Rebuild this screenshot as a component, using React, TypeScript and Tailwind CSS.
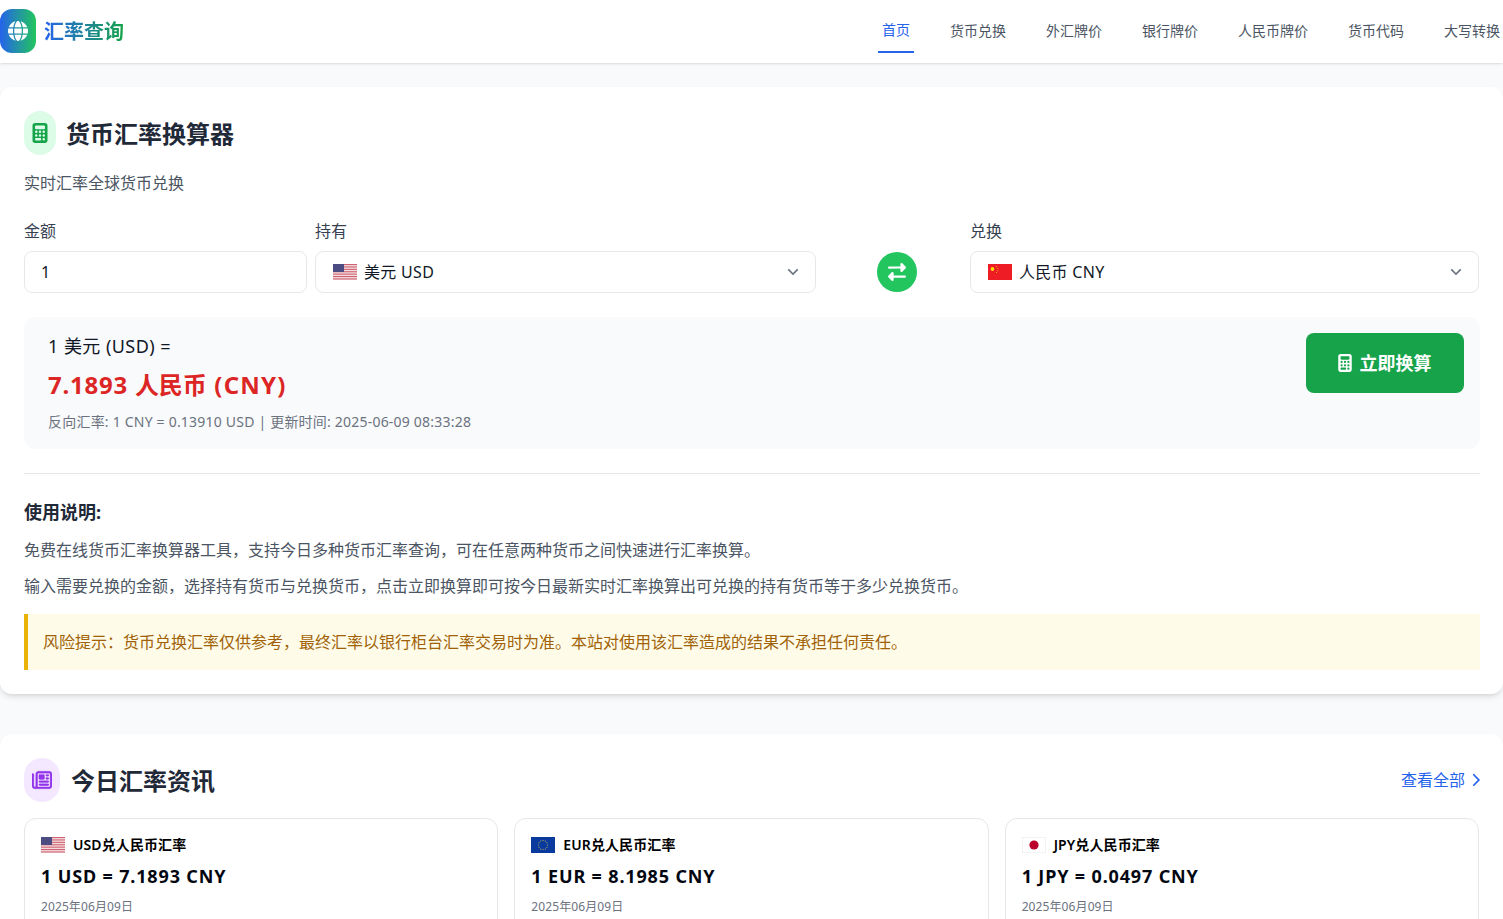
import { FaCalculator, FaChevronRight, FaGlobe, FaRegNewspaper, FaRightLeft } from "react-icons/fa6";
import { RiArrowDownSLine } from "react-icons/ri";

const navItems = ["首页", "货币兑换", "外汇牌价", "银行牌价", "人民币牌价", "货币代码", "大写转换"];

function FlagUS() {
  return (
    <svg viewBox="0 0 24 16" className="h-4 w-6 shrink-0">
      <rect width="24" height="16" fill="#f3dfe2" />
      {[0, 2.4, 4.8, 7.2, 9.6, 12, 14.4].map((y) => (
        <rect key={y} y={y} width="24" height="1.1" fill="#d0616f" />
      ))}
      <rect width="11" height="8" fill="#4c4c82" />
    </svg>
  );
}

function FlagCN() {
  return (
    <svg viewBox="0 0 24 16" className="h-4 w-6 shrink-0">
      <rect width="24" height="16" fill="#ee1c25" />
      <circle cx="4.5" cy="5" r="1.9" fill="#ffde00" />
      <circle cx="8.5" cy="2.5" r="0.5" fill="#ffde00" />
      <circle cx="9.8" cy="4.5" r="0.5" fill="#ffde00" />
      <circle cx="9.8" cy="6.8" r="0.5" fill="#ffde00" />
      <circle cx="8.5" cy="8.6" r="0.5" fill="#ffde00" />
    </svg>
  );
}

function FlagEU() {
  const stars = Array.from({ length: 12 }, (_, i) => (i * Math.PI) / 6);
  return (
    <svg viewBox="0 0 24 16" className="h-4 w-6 shrink-0">
      <rect width="24" height="16" fill="#0a3a9e" />
      {stars.map((a) => (
        <circle key={a} cx={12 + Math.cos(a) * 4.6} cy={8 + Math.sin(a) * 4.6} r="0.5" fill="#e6d23c" />
      ))}
    </svg>
  );
}

function FlagJP() {
  return (
    <svg viewBox="0 0 24 16" className="h-4 w-6 shrink-0">
      <rect x="0.25" y="0.25" width="23.5" height="15.5" fill="#fff" stroke="#e5e7eb" strokeWidth="0.5" />
      <circle cx="12" cy="8" r="4.6" fill="#bc002d" />
    </svg>
  );
}

function CurrencySelect({ flag, label }: { flag: React.ReactNode; label: string }) {
  return (
    <div className="flex h-[42px] items-center rounded-lg border border-[#e5e7eb] bg-white pl-[17px] pr-3">
      {flag}
      <span className="ml-[7px] flex-1 text-base tracking-[0.3px] text-[#111827]">{label}</span>
      <RiArrowDownSLine className="h-5 w-5 text-[#6b7280]" />
    </div>
  );
}

function NewsCard({ flag, title, rate }: { flag: React.ReactNode; title: string; rate: string }) {
  return (
    <div className="h-[130px] rounded-xl border border-[#e5e7eb] bg-white p-4">
      <div className="flex h-[20px] items-center gap-2">
        {flag}
        <span className="text-sm font-semibold tracking-[0.1px] text-black">{title}</span>
      </div>
      <div className="mt-[5px] text-[18px] leading-[32px] font-bold tracking-[0.85px] text-[#030712]">{rate}</div>
      <div className="mt-[5px] text-xs leading-[20px] tracking-[0.1px] text-[#6b7280]">2025年06月09日</div>
    </div>
  );
}

export default function App() {
  return (
    <div className="h-screen overflow-hidden bg-[#f9fafb] font-['Noto_Sans','Noto_Sans_CJK_SC',sans-serif]">
      <header className="flex h-[63px] items-center justify-between bg-white shadow-sm">
        <div className="-mt-px flex items-center gap-2">
          <div className="flex h-11 w-9 items-center justify-center rounded-xl bg-linear-to-r/srgb from-[#2563eb] to-[#22c55e]">
            <FaGlobe className="h-5 w-5 text-white" />
          </div>
          <span className="bg-linear-to-r/srgb from-[#2563eb] to-[#16a34a] bg-clip-text pt-[2px] text-xl font-bold text-transparent">
            汇率查询
          </span>
        </div>
        <nav className="flex h-full gap-10 pr-[3px]">
          {navItems.map((item, i) => (
            <a
              key={item}
              className={
                i === 0
                  ? "-mx-1 flex h-[53px] items-center self-start border-b-2 border-[#2563eb] px-1 pt-[9px] text-sm text-[#2563eb]"
                  : "flex h-[53px] items-center self-start pt-[9px] text-sm text-[#4b5563]"
              }
            >
              {item}
            </a>
          ))}
        </nav>
      </header>

      <main className="pt-6">
        <section className="rounded-xl bg-white p-6 shadow-md">
          <div className="flex items-center gap-[10px]">
            <div className="flex h-11 w-8 items-center justify-center rounded-full bg-[#dcfce7]">
              <FaCalculator className="h-5 w-5 text-[#16a34a]" />
            </div>
            <h1 className="pt-px text-2xl font-bold text-[#1f2937]">货币汇率换算器</h1>
          </div>
          <p className="mt-4 text-base leading-[24px] text-[#4b5563]">实时汇率全球货币兑换</p>

          <div className="mt-[24px] flex items-end">
            <div className="w-[283px]">
              <label className="mb-2 block text-base leading-[24px] text-[#374151]">金额</label>
              <div className="flex h-[42px] items-center rounded-lg border border-[#e5e7eb] bg-white pl-4 text-base text-[#111827]">
                1
              </div>
            </div>
            <div className="ml-2 w-[501px]">
              <label className="mb-2 block text-base leading-[24px] text-[#374151]">持有</label>
              <CurrencySelect flag={<FlagUS />} label="美元 USD" />
            </div>
            <div className="flex w-[154px] justify-center pb-px pl-2">
              <button className="flex h-10 w-10 items-center justify-center rounded-full bg-[#22c55e] text-white">
                <FaRightLeft className="h-[18px] w-[18px]" />
              </button>
            </div>
            <div className="flex-1">
              <label className="mb-2 block text-base leading-[24px] text-[#374151]">兑换</label>
              <CurrencySelect flag={<FlagCN />} label="人民币 CNY" />
            </div>
          </div>

          <div className="mr-[-1px] mt-6 flex h-[132px] items-start justify-between rounded-xl bg-[#f9fafb] py-4 pl-6 pr-4">
            <div className="-mt-px">
              <div className="text-lg leading-[28px] tracking-[0.45px] text-[#111827]">1 美元 (USD) =</div>
              <div className="mt-[9px] text-2xl leading-[32px] font-bold text-[#dc2626]">
                <span className="tracking-[0.75px]">7.1893 </span>
                人民币
                <span className="tracking-[1.2px]"> (CNY)</span>
              </div>
              <div className="mt-[11px] text-sm leading-[20px] tracking-[0.21px] text-[#6b7280]">
                反向汇率: 1 CNY = 0.13910 USD | 更新时间: 2025-06-09 08:33:28
              </div>
            </div>
            <button className="flex h-[60px] w-[158px] items-center justify-center gap-[6px] rounded-lg bg-[#16a34a] pr-[3px] text-lg font-bold text-white">
              <FaCalculator className="h-[18px] w-[18px]" />
              立即换算
            </button>
          </div>

          <div className="mr-[-1px] mt-6 border-t border-[#e5e7eb] pt-6">
            <h2 className="text-lg leading-[28px] font-bold text-[#1f2937]">使用说明:</h2>
            <p className="mt-[11px] text-base leading-[26px] text-[#4b5563]">
              免费在线货币汇率换算器工具，支持今日多种货币汇率查询，可在任意两种货币之间快速进行汇率换算。
            </p>
            <p className="mt-[10px] text-base leading-[26px] text-[#4b5563]">
              输入需要兑换的金额，选择持有货币与兑换货币，点击立即换算即可按今日最新实时汇率换算出可兑换的持有货币等于多少兑换货币。
            </p>
            <div className="mt-[15px] flex h-14 items-center border-l-4 border-[#eab308] bg-[#fefce8] pl-[15px] text-base text-[#a16207]">
              风险提示：货币兑换汇率仅供参考，最终汇率以银行柜台汇率交易时为准。本站对使用该汇率造成的结果不承担任何责任。
            </div>
          </div>
        </section>

        <section className="mt-10 rounded-xl bg-white p-6 shadow-md">
          <div className="flex items-center justify-between">
            <div className="flex items-center gap-[11px]">
              <div className="flex h-11 w-9 items-center justify-center rounded-full bg-[#f3e8ff]">
                <FaRegNewspaper className="h-5 w-5 text-[#9333ea]" stroke="currentColor" strokeWidth={8} />
              </div>
              <h2 className="pt-px text-2xl font-bold text-[#1f2937]">今日汇率资讯</h2>
            </div>
            <a className="mr-[-1px] flex items-center gap-[6px] text-base text-[#2563eb]">
              查看全部
              <FaChevronRight className="h-[14px] w-[9px]" />
            </a>
          </div>
          <div className="mt-4 grid grid-cols-3 gap-4">
            <NewsCard flag={<FlagUS />} title="USD兑人民币汇率" rate="1 USD = 7.1893 CNY" />
            <NewsCard flag={<FlagEU />} title="EUR兑人民币汇率" rate="1 EUR = 8.1985 CNY" />
            <NewsCard flag={<FlagJP />} title="JPY兑人民币汇率" rate="1 JPY = 0.0497 CNY" />
          </div>
        </section>
      </main>
    </div>
  );
}
